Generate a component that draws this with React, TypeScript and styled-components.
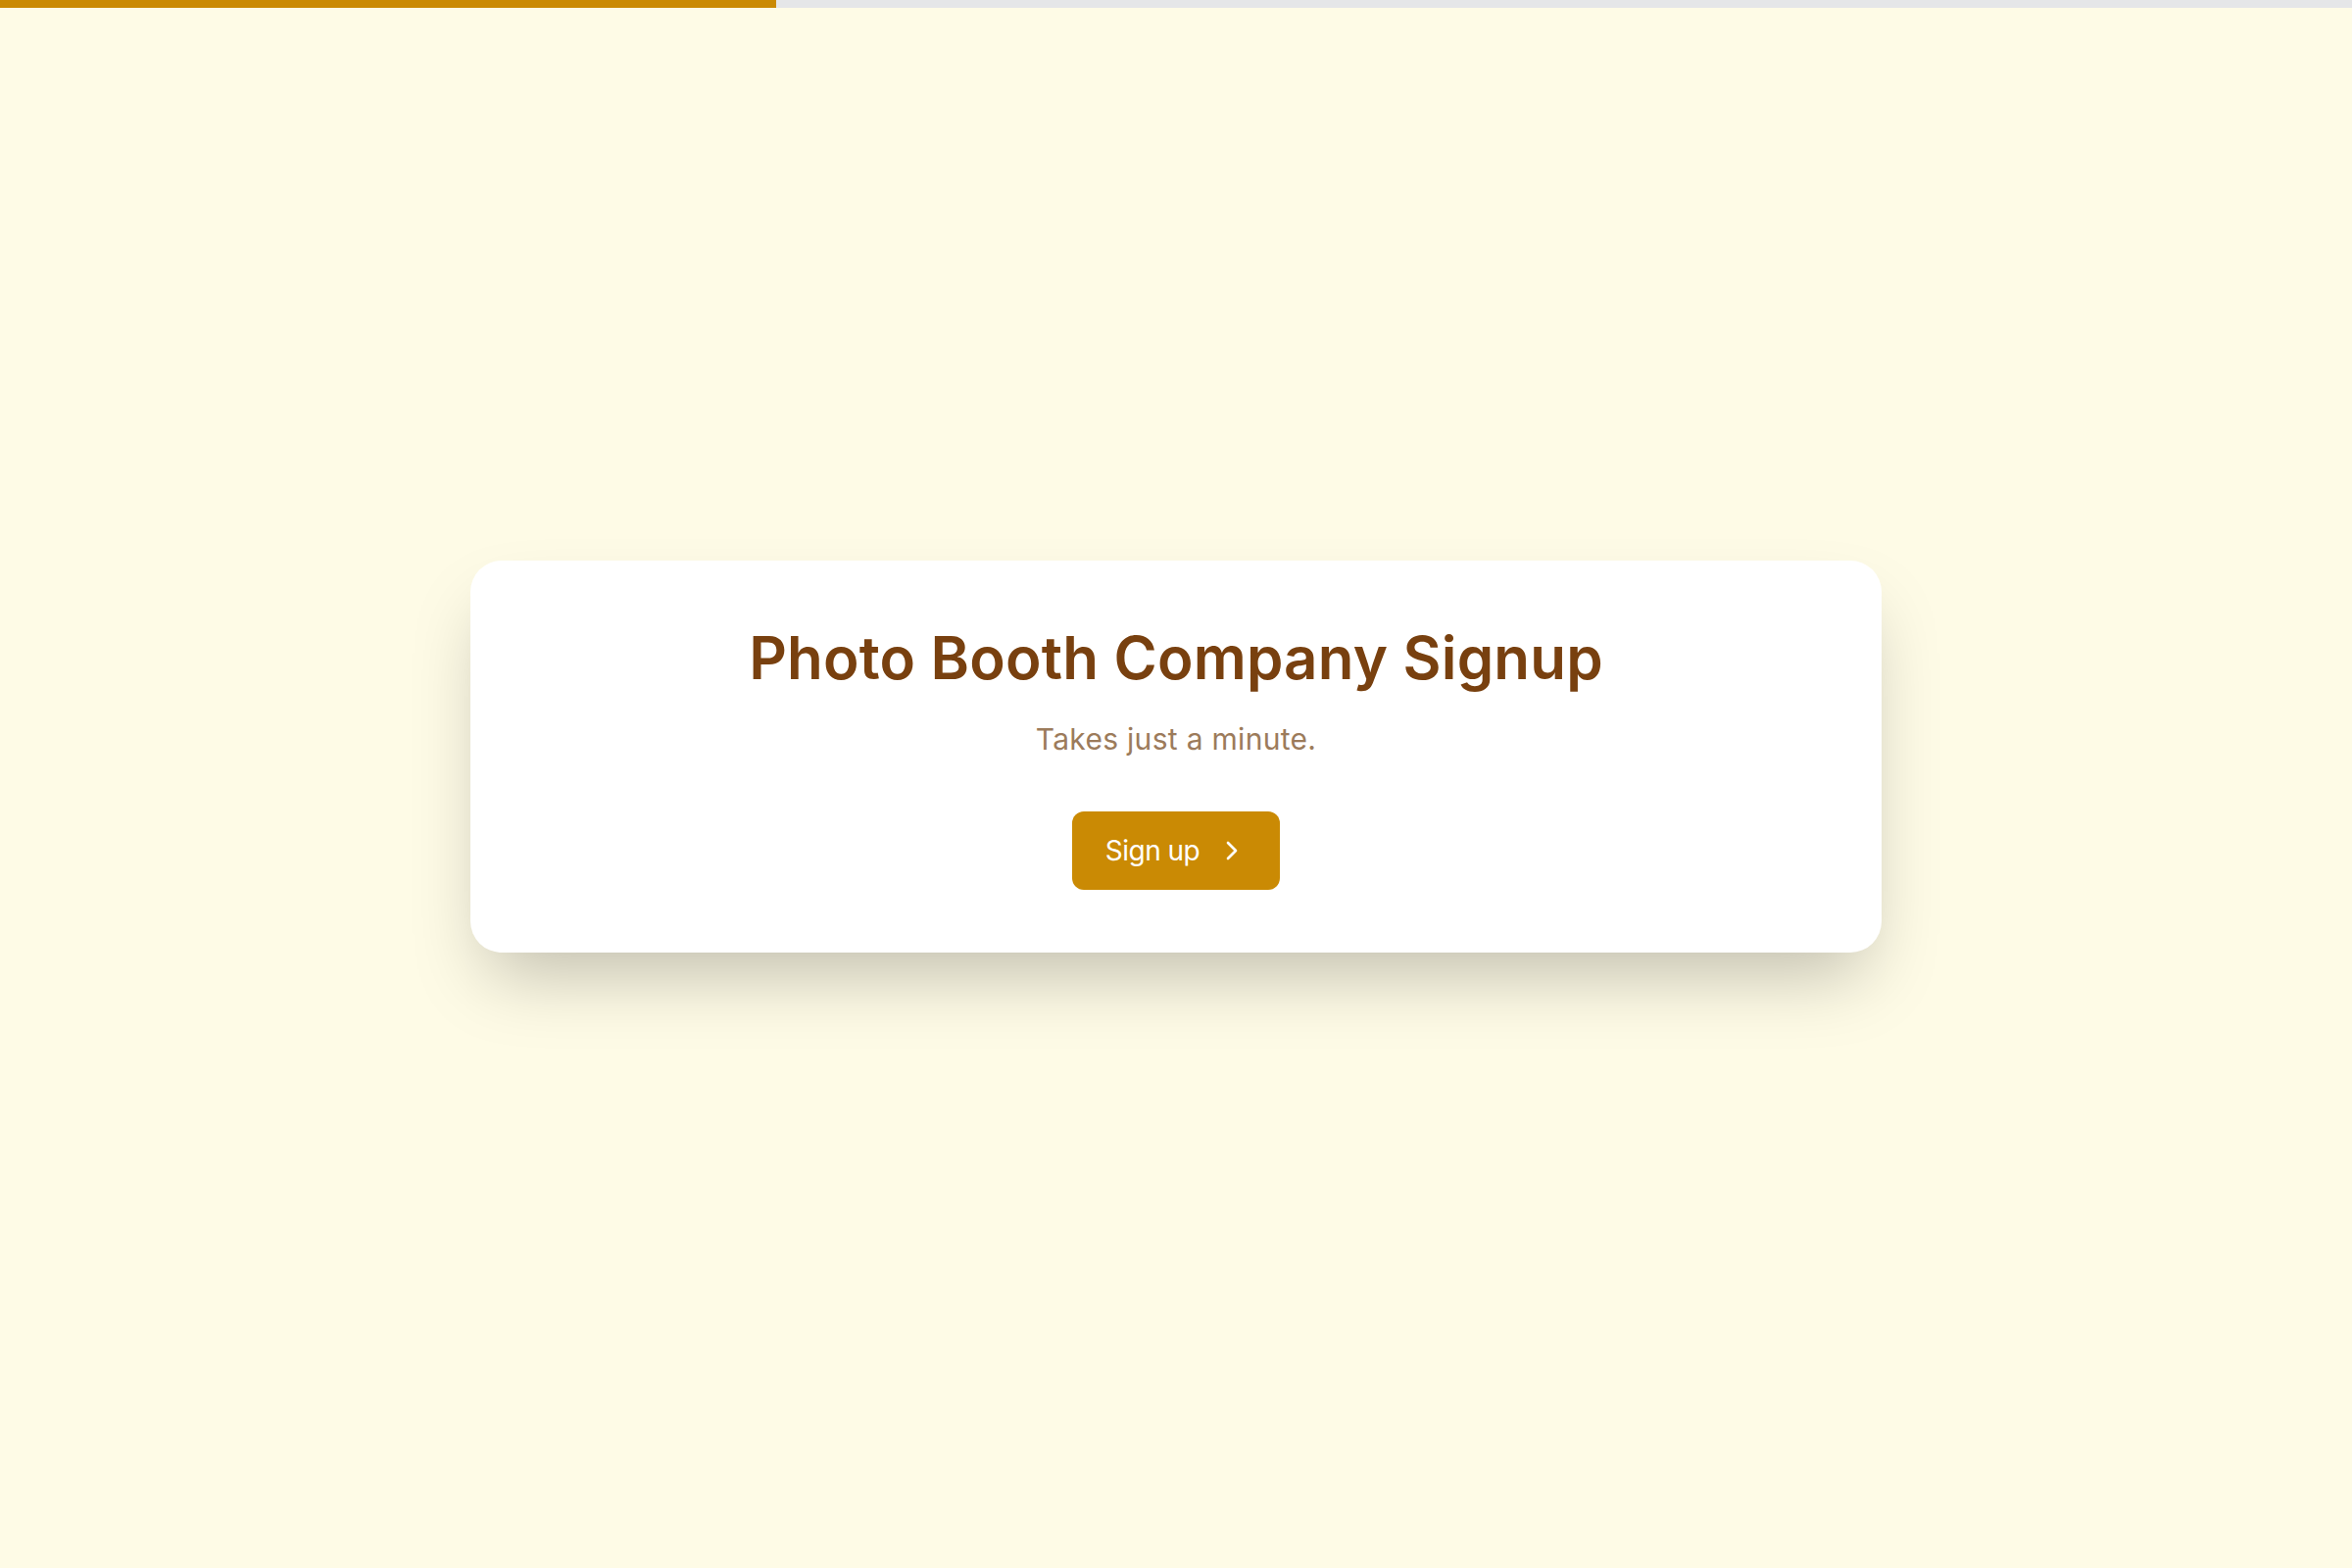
import React from 'react';
import styled, { createGlobalStyle } from 'styled-components';
import { ChevronRight } from 'lucide-react';

const GlobalStyle = createGlobalStyle`
  html, body {
    margin: 0;
    padding: 0;
    background: #fefbe6;
  }
  * {
    box-sizing: border-box;
  }
`;

const Page = styled.main`
  min-height: 100vh;
  display: flex;
  flex-direction: column;
  background: #fefbe6;
  font-family: Inter, "Noto Sans", sans-serif;
`;

const ProgressTrack = styled.div`
  height: 8px;
  width: 100%;
  background: #e5e6e8;
`;

const ProgressFill = styled.div`
  height: 100%;
  background: #ca8a04;
`;

const Stage = styled.section`
  display: flex;
  justify-content: center;
  padding-top: 564px;
`;

const Card = styled.div`
  width: 1440px;
  display: flex;
  flex-direction: column;
  align-items: center;
  padding: 69px 48px 64px;
  background: #ffffff;
  border-radius: 32px;
  box-shadow: 0 38px 75px -18px rgba(0, 0, 0, 0.25);
`;

const Title = styled.h1`
  margin: 0;
  font-size: 60px;
  line-height: 1;
  font-weight: 600;
  letter-spacing: 0.2px;
  color: #78400f;
`;

const Subtitle = styled.p`
  margin: 31px 0 0;
  font-size: 30px;
  line-height: 45px;
  font-weight: 400;
  letter-spacing: 0.3px;
  color: #9c7b5b;
`;

const SignupButton = styled.button`
  margin-top: 51px;
  height: 80px;
  padding: 0 33px 0 34px;
  display: flex;
  align-items: center;
  gap: 17px;
  border: none;
  border-radius: 12px;
  background: #ca8a04;
  color: #ffffff;
  font-family: inherit;
  font-size: 28px;
  font-weight: 400;
  letter-spacing: -0.5px;
  cursor: pointer;
`;

export default function App() {
  const progress = 33;
  return (
    <>
      <GlobalStyle />
      <Page>
        <ProgressTrack>
          <ProgressFill style={{ width: `${progress}%` }} />
        </ProgressTrack>
        <Stage>
          <Card>
            <Title>Photo Booth Company Signup</Title>
            <Subtitle>Takes just a minute.</Subtitle>
            <SignupButton>
              Sign up
              <ChevronRight size={32} strokeWidth={2} />
            </SignupButton>
          </Card>
        </Stage>
      </Page>
    </>
  );
}
